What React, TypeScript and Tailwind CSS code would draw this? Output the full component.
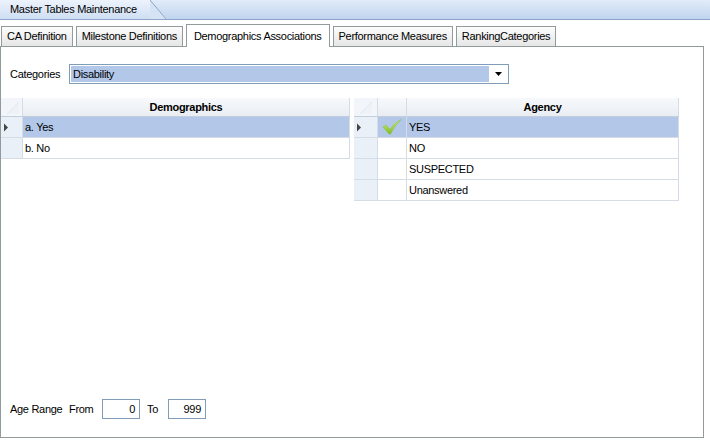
import React from "react";

const font = { fontFamily: '"Liberation Sans", Arial, sans-serif' };

function Corner() {
  return (
    <svg width="22" height="18" className="block">
      <path d="M6 16 L18 4" stroke="#d8dee8" strokeWidth="1" fill="none" />
      <path d="M18 4 L18 16 L6 16" fill="#eef2f7" />
    </svg>
  );
}

function Arrow() {
  return (
    <svg width="6" height="9" className="block">
      <path d="M1 0.5 L5 4.5 L1 8.5 Z" fill="#444" />
    </svg>
  );
}

function Check() {
  return (
    <svg width="20" height="16" viewBox="0 0 20 16" className="block">
      <defs>
        <linearGradient id="chk" x1="0" y1="0" x2="0" y2="1">
          <stop offset="0" stopColor="#d8f27a" />
          <stop offset="1" stopColor="#7cba26" />
        </linearGradient>
      </defs>
      <path
        d="M1 8 L4 6 L8 10.5 Q12 4 19 0.5 Q13 6 8.5 15 L7 15 Z"
        fill="url(#chk)"
        stroke="#8cc040"
        strokeWidth="0.6"
      />
    </svg>
  );
}

export default function App() {
  const tabs = [
    "CA Definition",
    "Milestone Definitions",
    "Demographics Associations",
    "Performance Measures",
    "RankingCategories",
  ];
  const agency = ["YES", "NO", "SUSPECTED", "Unanswered"];

  return (
    <div
      className="w-[710px] h-[447px] bg-white text-[11px] tracking-[-0.3px] text-black overflow-hidden"
      style={font}
    >
      {/* title bar */}
      <div className="h-[20px] flex items-stretch border-b border-[#8ea6c9] bg-gradient-to-b from-[#e2ecf9] to-[#c0d4ef]">
        <div className="flex items-center pl-[10px] w-[150px] bg-gradient-to-b from-[#edf3fc] to-[#cfdef3]">
          Master Tables Maintenance
        </div>
        <svg width="17" height="19" className="block">
          <path d="M0 0 L0 19 L17 19 Z" fill="#d6e3f5" />
          <path d="M0 0 L16 19" stroke="#8ea6c9" strokeWidth="1" fill="none" />
        </svg>
      </div>

      {/* tab strip */}
      <div className="flex items-end h-[26px] pl-[1px] gap-[3px]">
        {tabs.map((t, i) =>
          i === 2 ? (
            <div
              key={t}
              className="h-[23px] px-[7px] flex items-center bg-white border border-b-0 border-[#919b9c] relative top-[1px] z-10"
            >
              {t}
            </div>
          ) : (
            <div
              key={t}
              className="h-[20px] px-[5px] flex items-center bg-gradient-to-b from-[#fcfcfc] to-[#e6e6e6] border border-b-0 border-[#919b9c]"
            >
              {t}
            </div>
          )
        )}
      </div>

      {/* panel */}
      <div className="w-[704px] h-[392px] border border-[#919b9c] flex flex-col">
        <div className="flex items-center mt-[17px] ml-[9px]">
          <span className="w-[59px]">Categories</span>
          <div className="w-[440px] h-[20px] border border-[#7f9db9] bg-white p-[1px] flex">
            <div className="flex-1 bg-[#b3c8e8] flex items-center pl-[2px]">Disability</div>
            <div className="w-[18px] flex items-center justify-center">
              <svg width="7" height="4" className="block">
                <path d="M0 0 L7 0 L3.5 4 Z" fill="#000" />
              </svg>
            </div>
          </div>
        </div>

        <div className="flex items-start mt-[14px] gap-[4px]">
          {/* Demographics grid */}
          <div className="w-[349px]">
            <div className="flex h-[19px] border-b border-[#c5cfdc]">
              <div className="w-[22px] bg-[#f2f5f9] border-r border-[#d5dce6]">
                <Corner />
              </div>
              <div className="flex-1 flex items-center justify-center font-bold bg-gradient-to-b from-[#f7f9fc] to-[#e9edf3] border-r border-[#d5dce6]">
                Demographics
              </div>
            </div>
            {["a. Yes", "b. No"].map((r, i) => (
              <div key={r} className="flex h-[21px] border-b border-[#d5dce6]">
                <div className="w-[22px] bg-[#eaf0f8] border-r border-[#d5dce6] flex items-center pl-[2px]">
                  {i === 0 && <Arrow />}
                </div>
                <div
                  className={`flex-1 flex items-center pl-[2px] border-r border-[#d5dce6] ${
                    i === 0 ? "bg-[#b3c8e8]" : "bg-white"
                  }`}
                >
                  {r}
                </div>
              </div>
            ))}
          </div>

          {/* Agency grid */}
          <div className="w-[325px]">
            <div className="flex h-[19px] border-b border-[#c5cfdc]">
              <div className="w-[24px] bg-[#f2f5f9] border-r border-[#d5dce6]">
                <Corner />
              </div>
              <div className="w-[29px] bg-gradient-to-b from-[#f7f9fc] to-[#e9edf3] border-r border-[#d5dce6]" />
              <div className="flex-1 flex items-center justify-center font-bold bg-gradient-to-b from-[#f7f9fc] to-[#e9edf3] border-r border-[#d5dce6]">
                Agency
              </div>
            </div>
            {agency.map((r, i) => (
              <div key={r} className="flex h-[21px] border-b border-[#d5dce6]">
                <div className="w-[24px] bg-[#eaf0f8] border-r border-[#d5dce6] flex items-center pl-[2px]">
                  {i === 0 && <Arrow />}
                </div>
                <div
                  className={`w-[29px] flex items-center justify-center border-r border-[#d5dce6] ${
                    i === 0 ? "bg-[#b3c8e8]" : "bg-white"
                  }`}
                >
                  {i === 0 && <Check />}
                </div>
                <div
                  className={`flex-1 flex items-center pl-[2px] border-r border-[#d5dce6] ${
                    i === 0 ? "bg-[#b3c8e8]" : "bg-white"
                  }`}
                >
                  {r}
                </div>
              </div>
            ))}
          </div>
        </div>

        {/* age range */}
        <div className="mt-auto mb-[18px] ml-[9px] flex items-center">
          <span className="w-[59px]">Age Range</span>
          <span className="w-[33px]">From</span>
          <div className="w-[38px] h-[20px] border border-[#7f9db9] flex items-center justify-end pr-[4px]">
            0
          </div>
          <span className="ml-[7px] w-[21px]">To</span>
          <div className="w-[38px] h-[20px] border border-[#7f9db9] flex items-center justify-end pr-[4px]">
            999
          </div>
        </div>
      </div>
    </div>
  );
}
